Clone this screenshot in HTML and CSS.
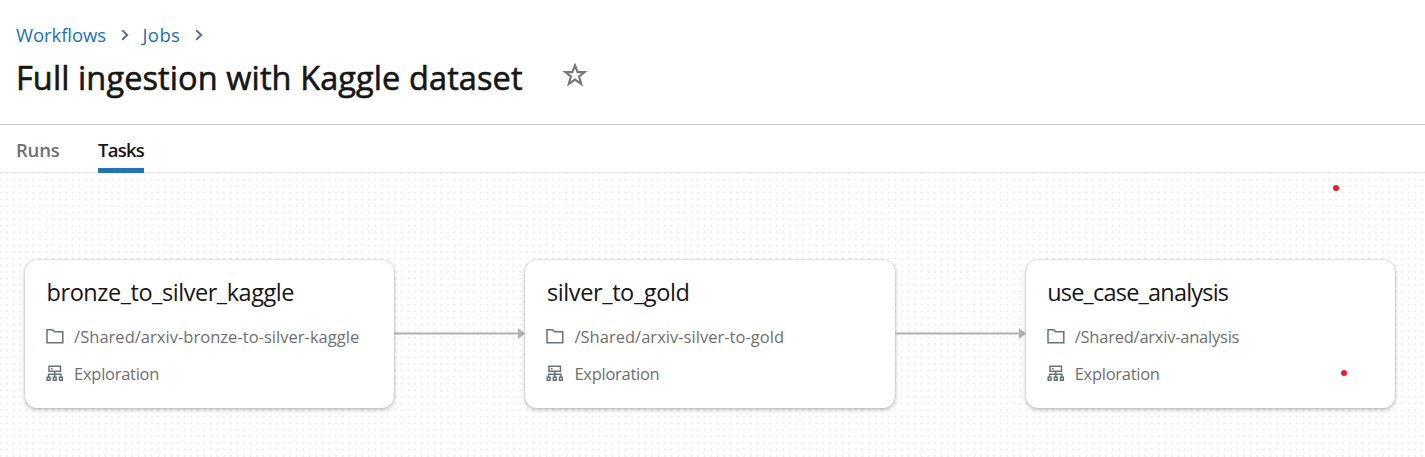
FILE: index.html
```html
<!DOCTYPE html>
<html lang="en">
<head>
<meta charset="utf-8">
<title>Full ingestion with Kaggle dataset</title>
<link rel="stylesheet" href="styles.css">
</head>
<body>
<svg class="defs" aria-hidden="true">
  <symbol id="chevron" viewBox="0 0 8 12"><path d="M1.2 1.2 6.2 6 1.2 10.8" fill="none" stroke="currentColor" stroke-width="2"/></symbol>
  <symbol id="folder" viewBox="0 0 18 16"><path d="M1 14.2V1.2H6.6L8.6 3.2H16.8V14.2Z" fill="none" stroke="currentColor" stroke-width="1.5"/></symbol>
  <symbol id="cluster" viewBox="0 0 18 17"><g fill="none" stroke="currentColor" stroke-width="1.5"><path d="M3 1.3H14.5V6.3H3ZM8.75 6.3V12M2.6 12V9.2H14.9V12"/><path d="M1.2 12.2H4V15.2H1.2ZM7.35 12.2H10.15V15.2H7.35ZM13.5 12.2H16.3V15.2H13.5Z"/></g><path d="M5 3.1H6.6V4.6H5Z" fill="currentColor"/></symbol>
</svg>
<header class="header">
  <nav class="breadcrumbs">
    <a class="crumb crumb-workflows">Workflows</a><svg class="chevron"><use href="#chevron"/></svg>
    <a class="crumb crumb-jobs">Jobs</a><svg class="chevron"><use href="#chevron"/></svg>
  </nav>
  <div class="title-row">
    <h1 class="title">Full ingestion with Kaggle dataset</h1>
    <svg class="star" viewBox="0 0 24 24"><path d="M12 3.2 14.4 9.3H20.9L15.8 13.4 17.7 20.2 12 16.3 6.3 20.2 8.2 13.4 3.1 9.3H9.6Z" fill="none" stroke="currentColor" stroke-width="2"/></svg>
  </div>
</header>
<nav class="tabs"><a class="tab">Runs</a><a class="tab tab-active">Tasks</a></nav>
<main class="canvas">
  <svg class="grid"><defs><pattern id="dots" x="-2.9" y="-3.2" width="6.581" height="6.581" patternUnits="userSpaceOnUse"><circle cx="3.29" cy="3.29" r="1.05" fill="#e5e5e5"/></pattern></defs><rect width="100%" height="100%" fill="url(#dots)"/></svg>
  <div class="flow">
    <section class="card">
      <h2 class="name name-bronze">bronze_to_silver_kaggle</h2>
      <div class="row"><svg class="icon"><use href="#folder"/></svg><span class="path-bronze">/Shared/arxiv-bronze-to-silver-kaggle</span></div>
      <div class="row"><svg class="icon"><use href="#cluster"/></svg><span class="compute">Exploration</span></div>
    </section>
    <svg class="edge" viewBox="0 0 131 12"><path d="M0 5.5H125" stroke="#b0b0b3" stroke-width="2"/><path d="M124 0 131 5.5 124 11Z" fill="#b0b0b5"/></svg>
    <section class="card">
      <h2 class="name name-silver">silver_to_gold</h2>
      <div class="row"><svg class="icon"><use href="#folder"/></svg><span class="path-silver">/Shared/arxiv-silver-to-gold</span></div>
      <div class="row"><svg class="icon"><use href="#cluster"/></svg><span class="compute">Exploration</span></div>
    </section>
    <svg class="edge" viewBox="0 0 131 12"><path d="M0 5.5H125" stroke="#b0b0b3" stroke-width="2"/><path d="M124 0 131 5.5 124 11Z" fill="#b0b0b5"/></svg>
    <section class="card">
      <h2 class="name name-analysis">use_case_analysis</h2>
      <div class="row"><svg class="icon"><use href="#folder"/></svg><span class="path-analysis">/Shared/arxiv-analysis</span></div>
      <div class="row"><svg class="icon"><use href="#cluster"/></svg><span class="compute">Exploration</span></div>
    </section>
  </div>
  <i class="marker marker-top"></i>
  <i class="marker marker-bottom"></i>
</main>
</body>
</html>
```
FILE: styles.css
```css
* { box-sizing: border-box; }
body { margin: 0; height: 457px; overflow: hidden; display: flex; flex-direction: column; background: #fff; color: #161616; font-family: "Open Sans", "Noto Sans", sans-serif; white-space: nowrap; }
.defs { position: absolute; width: 0; height: 0; }
.header { height: 125px; padding: 22px 16px 0; border-bottom: 1px solid #cbcbcb; }
.breadcrumbs { display: flex; align-items: center; height: 26px; font-size: 18.5px; line-height: 25px; color: #2272b4; }
.crumb { height: 26px; }
.crumb-workflows { width: 104.5px; letter-spacing: -0.08px; }
.crumb-jobs { width: 52.5px; letter-spacing: 0.4px; }
.chevron { width: 8px; height: 12px; margin-right: 14px; color: #5f7281; }
.title-row { display: flex; align-items: center; height: 60px; }
.title { width: 546px; margin: 0; font-size: 32.5px; line-height: 60px; font-weight: 400; letter-spacing: 0.1px; -webkit-text-stroke: 0.6px #161616; }
.star { width: 26px; height: 26px; margin-top: -6px; color: #777; }
.tabs { display: flex; gap: 38px; height: 48px; padding-left: 16px; border-bottom: 1px solid #e6e6e6; font-size: 18.5px; line-height: 50px; font-weight: 600; color: #6f6f6f; }
.tab { width: 44px; height: 48px; letter-spacing: -0.2px; }
.tab-active { width: 46px; color: #161616; border-bottom: 5px solid #2272b4; letter-spacing: -0.75px; }
.canvas { position: relative; flex: 1; padding: 87px 0 0 25px; }
.grid { position: absolute; left: 0; top: 0; width: 100%; height: 100%; }
.flow { position: relative; display: flex; align-items: center; }
.card { flex: none; width: 369.3px; height: 147.5px; padding: 14px 21.6px; background: #fff; border-radius: 12px; box-shadow: 0 0 2px rgba(0,0,0,.22), 0 2px 5px rgba(0,0,0,.23); }
.name { margin: 0 0 7px; font-size: 23.5px; font-weight: 400; line-height: 37px; }
.name-bronze { letter-spacing: -0.45px; }
.name-silver { letter-spacing: -0.38px; }
.name-analysis { letter-spacing: -0.8px; }
.row { display: flex; align-items: center; gap: 9.5px; height: 37px; font-size: 16.5px; color: #6f6f6f; }
.path-bronze { letter-spacing: 0.03px; }
.path-silver { letter-spacing: 0.03px; }
.path-analysis { letter-spacing: -0.23px; }
.compute { letter-spacing: -0.27px; }
.icon { width: 18px; height: 17px; margin-left: -0.5px; margin-right: 0.5px; color: #66727d; }
.edge { flex: none; width: 131px; height: 12px; }
.marker { position: absolute; width: 6px; height: 6px; border-radius: 50%; background: #ed1c24; }
.marker-top { left: 1333px; top: 12px; }
.marker-bottom { left: 1341px; top: 197px; }
```
